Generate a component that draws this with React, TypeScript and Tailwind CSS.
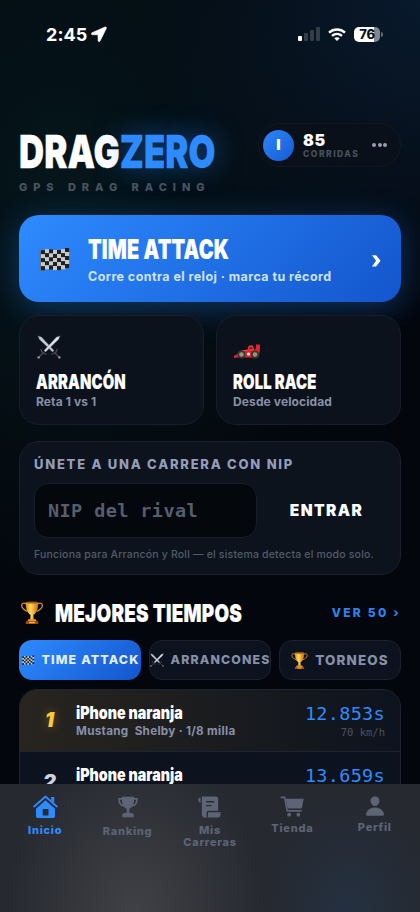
import type { ReactNode } from 'react';
import clsx from 'clsx';
import { IoPerson } from 'react-icons/io5';

type IconProps = { className?: string };

function FlagIcon({ className }: IconProps) {
  const cells = [];
  for (let r = 0; r < 5; r++) {
    for (let c = 0; c < 7; c++) {
      const lift = [2.2, 1.2, 1.4, 2, 2, 1.2, 0][c];
      cells.push(
        <rect
          key={`${r}-${c}`}
          x={2 + c * 4}
          y={1 + r * 4 + lift}
          width={4.1}
          height={4.1}
          fill={(r + c) % 2 ? '#c9c9c7' : '#20211f'}
        />
      );
    }
  }
  return (
    <svg viewBox="0 0 31 26" className={className}>
      <path d="M1.2 1v24" stroke="#77736b" strokeWidth="1.2" />
      {cells}
    </svg>
  );
}

function SwordsIcon({ className }: IconProps) {
  return (
    <svg viewBox="0 0 24 24" className={className} fill="none" strokeLinecap="round">
      <path d="M1 1l3.500 1L17 15.500l-1.500 1.500L2.500 4.500z" fill="#c5c9d3" stroke="#59606d" strokeWidth=".4" />
      <path d="M23 1l-3.500 1L7 15.500 8.500 17 21.500 4.500z" fill="#dde0e8" stroke="#59606d" strokeWidth=".4" />
      <path d="M4 14.500c.4 2.500 2 4.200 5 4.600M20 14.500c-.4 2.500-2 4.200-5 4.600" stroke="#474a57" strokeWidth="1.400" />
      <path d="M6.500 17.500L2 22M17.500 17.500L22 22" stroke="#4a4048" strokeWidth="1.500" />
      <circle cx="1.600" cy="22.400" r="1.200" fill="#9a9ca7" />
      <circle cx="22.400" cy="22.400" r="1.200" fill="#9a9ca7" />
    </svg>
  );
}

function RaceCarIcon({ className }: IconProps) {
  return (
    <svg viewBox="0 0 26 15" className={className}>
      <path d="M0 14v-2.500l2-.5L7 6.500l7-1 1-4h4l1 4 2-.5V.500h4V5l-1 7-8 1.500H3z" fill="#e3222c" />
      <path d="M14 3l4-1 1.500 3.500-4 .5zM8 7l6-1" fill="#a1121d" stroke="#f06a6a" strokeWidth=".6" />
      <circle cx="7.500" cy="10.500" r="4" fill="#39352f" />
      <circle cx="7.500" cy="10.500" r="2.300" fill="#9b9483" />
      <circle cx="21" cy="10.500" r="4" fill="#39352f" />
      <circle cx="21" cy="10.500" r="2.300" fill="#9b9483" />
      <circle cx="14.500" cy="10" r="1.600" fill="#fff" />
    </svg>
  );
}

function CupIcon({ className }: IconProps) {
  return (
    <svg viewBox="0 0 24 24" className={className} fill="none">
      <defs>
        <linearGradient id="gold" x1="0" x2="1">
          <stop offset="0" stopColor="#e08f12" />
          <stop offset=".4" stopColor="#ffd65a" />
          <stop offset="1" stopColor="#c87006" />
        </linearGradient>
      </defs>
      <path
        d="M6 3.200C3.500 1.600 1 2.300 1.200 5c.2 3.600 3.300 4.300 6 6M18 3.200c2.500-1.600 5-.9 4.800 1.800-.2 3.600-3.300 4.300-6 6"
        stroke="#d08d22"
        strokeWidth="1.300"
      />
      <path d="M5.500 1h13c0 6-1 11-5 13.500l.3 5h-3.600l.3-5C6.500 12 5.500 7 5.500 1z" fill="url(#gold)" />
      <ellipse cx="12" cy="1.500" rx="6.500" ry="1.100" fill="#a95c09" />
      <path d="M8 19h8l.8 2H7.200z" fill="#e89b22" />
      <path d="M5.500 21h13v3h-13z" fill="#a84a10" />
      <path d="M9 21.700h6v1.500H9z" fill="#ffb93f" />
    </svg>
  );
}

function HomeIcon({ className }: IconProps) {
  return (
    <svg viewBox="0 0 25 24" className={className} fill="currentColor">
      <path d="M1.200 11.500 12.500 1.500 23.800 11.500" fill="none" stroke="currentColor" strokeWidth="1.800" strokeLinecap="round" strokeLinejoin="round" />
      <path d="M18.200 2h3v6l-3-2.700z" />
      <path fillRule="evenodd" d="M12.500 5.300 22 13.800v7.400c0 1.100-.8 1.800-1.900 1.800H4.900C3.800 23 3 22.300 3 21.200v-7.400zM9.700 14v6.500h5.800V14z" />
    </svg>
  );
}

function TrophyIcon({ className }: IconProps) {
  return (
    <svg viewBox="0 0 24 24" className={className} fill="currentColor">
      <path d="M5.500 3.200H2.200c0 4 1.300 7 5.300 7.600M18.500 3.200h3.300c0 4-1.300 7-5.300 7.600" fill="none" stroke="currentColor" strokeWidth="1.800" />
      <path d="M5.300.8h13.400c.3 5.700-.6 11.200-5.200 13v4.700h2.300c1.400 0 2.400 1 2.400 2.400v2.400H5.800v-2.400c0-1.400 1-2.400 2.400-2.400h2.300v-4.700C5.900 12 5 6.500 5.300.8z" />
    </svg>
  );
}

function ScrollIcon({ className }: IconProps) {
  return (
    <svg viewBox="0 0 24 24" className={className} fill="currentColor">
      <path d="M2.600 2v5.500C1.300 7.500.5 6.500.5 5.200V4C.5 2.800 1.400 2 2.600 2z" />
      <path
        fillRule="evenodd"
        d="M4 1h14.500c1.400 0 2.500 1.100 2.500 2.500V16H11c-1.200 0-2 .8-2 2v5H7.500C5.500 23 4 21.600 4 19.700zM8.500 5.800v1.500H17V5.800zm0 4v1.500h5.700V9.800z"
      />
      <path d="M10.500 17.400H23.500v2.800c0 1.800-1.200 2.800-2.800 2.800H9.800c.5-.5.700-1.200.7-2z" />
    </svg>
  );
}

function CartIcon({ className }: IconProps) {
  return (
    <svg viewBox="0 0 25 24" className={className} fill="currentColor">
      <path d="M.8 2.500h3.500l2.700 14h14.500" fill="none" stroke="currentColor" strokeWidth="1.700" strokeLinecap="round" strokeLinejoin="round" />
      <path d="M5.500 4h18.700l-1.700 8.800c-.2.900-.8 1.300-1.600 1.300H7.400z" />
      <circle cx="9" cy="20.500" r="2" />
      <circle cx="18.600" cy="20.500" r="2" />
    </svg>
  );
}

function StatusBar() {
  return (
    <div className="flex items-center justify-between h-[68px] pl-[46px] pr-[37px] text-white">
      <div className="flex items-center gap-1">
        <span className="text-[18px] font-bold tracking-[0.1px]">2:45</span>
        <svg viewBox="0 0 16 16" className="w-[16px] h-[16px]" fill="currentColor" stroke="currentColor" strokeWidth=".6">
          <path d="M14 1 1 6.800c-1.200.5-.8 1.900.3 1.900l5.700.1.100 5.800c0 1.200 1.500 1.500 2 .3L15.300 2.400c.4-.9-.4-1.800-1.300-1.400z" />
        </svg>
      </div>
      <div className="flex items-center gap-2">
        <div className="flex items-end gap-[2px] h-[14px]">
          <i className="w-1 h-[5px] rounded-[1px] bg-white" />
          <i className="w-1 h-[8px] rounded-[1px] bg-[#343c46]" />
          <i className="w-1 h-[11px] rounded-[1px] bg-[#343c46]" />
          <i className="w-1 h-[14px] rounded-[1px] bg-[#343c46]" />
        </div>
        <svg viewBox="0 0 18 13" className="w-[18px] h-[13px]" fill="none" stroke="currentColor" strokeWidth="2.400">
          <path d="M1 4.600c4.600-4.200 11.400-4.200 16 0" />
          <path d="M4 7.900c2.900-2.600 7.100-2.600 10 0" />
          <path d="M9 13 6.300 10.200c1.500-1.400 3.900-1.400 5.400 0z" fill="currentColor" stroke="none" />
        </svg>
        <div className="flex items-center gap-[1px]">
          <div className="w-[26px] h-[15px] rounded-[5px] bg-[linear-gradient(90deg,#fff_76%,#80868e_76%)] text-[#08111c] text-[13px] leading-[15px] font-extrabold text-center tracking-[-0.3px]">
            76
          </div>
          <i className="w-[2px] h-[5px] rounded-r bg-[#626973]" />
        </div>
      </div>
    </div>
  );
}

// condensed display face
function Heading({ className, children }: { className?: string; children: ReactNode }) {
  return (
    <div className={clsx('font-black whitespace-nowrap origin-left w-0 text-white', className)}>{children}</div>
  );
}

const modes = [
  { name: 'ARRANCÓN', detail: 'Reta 1 vs 1', icon: <SwordsIcon className="w-[24px] h-[24px]" /> },
  { name: 'ROLL RACE', detail: 'Desde velocidad', icon: <RaceCarIcon className="w-[26px] h-[15px]" /> },
];

const tabs = [
  { label: 'TIME ATTACK', active: true, size: 'text-[12.4px]', icon: <FlagIcon className="w-[14px] h-[11px] shrink-0" /> },
  { label: 'ARRANCONES', active: false, size: 'text-[12.3px]', icon: <SwordsIcon className="w-[14px] h-[14px] shrink-0" /> },
  { label: 'TORNEOS', active: false, size: 'text-[13.4px]', icon: <CupIcon className="w-[17px] h-[17px] shrink-0" /> },
];

const times = [
  { pos: 1, name: 'iPhone naranja', car: 'Mustang\u00a0 Shelby · 1/8 milla', time: '12.853s', speed: '70 km/h' },
  { pos: 2, name: 'iPhone naranja', car: '', time: '13.659s', speed: '' },
];

const navItems = [
  { label: 'Inicio', icon: <HomeIcon className="w-[25px] h-[24px]" />, gap: 'gap-[5px]' },
  { label: 'Ranking', icon: <TrophyIcon className="w-[22px] h-[24px]" />, gap: 'gap-[6px]' },
  { label: 'Mis Carreras', icon: <ScrollIcon className="w-[23px] h-[24px]" />, gap: 'gap-[5px]' },
  { label: 'Tienda', icon: <CartIcon className="w-[25px] h-[23px]" />, gap: 'gap-[4px]' },
  { label: 'Perfil', icon: <IoPerson className="w-[22px] h-[22px]" />, gap: 'gap-[4px]' },
];

export default function App() {
  return (
    <div className="w-[420px] h-[912px] overflow-hidden flex flex-col bg-[#03060c] bg-[radial-gradient(ellipse_280px_330px_at_420px_0px,#091a2d,transparent),radial-gradient(ellipse_330px_440px_at_60px_180px,#05161b,transparent)] font-[Inter,sans-serif]">
      <div className="h-[784px] overflow-hidden">
        <StatusBar />

        <header className="flex justify-between pl-5 pr-[19px] mt-[55px] h-[92px]">
          <div className="pt-[2px] -ml-px">
            <Heading className="text-[46px] leading-[52px] scale-x-[0.755] tracking-[0.1px] [-webkit-text-stroke:0.3px]">
              DRAG<span className="text-[#2e8bff] [text-shadow:0_0_32px_rgba(46,139,255,0.55)]">ZERO</span>
            </Heading>
            <div className="mt-[2px] text-[11px] leading-4 font-extrabold tracking-[5.95px] text-[#4a5360]">GPS DRAG RACING</div>
          </div>
          <div className="flex items-center w-[143px] h-[44px] rounded-full border border-[#111822] bg-[#0a101a] pl-[4px] pr-[13px]">
            <div className="w-[31px] h-[31px] rounded-full bg-linear-to-br from-[#2e86fa] to-[#165bd3] flex items-center justify-center text-white text-[15px] font-black">
              I
            </div>
            <div className="ml-[9px] flex-1 pt-[2px]">
              <div className="text-white text-[16px] leading-[17px] font-black tracking-[0.6px]">85</div>
              <div className="text-[#48505e] text-[8.5px] leading-[11px] font-extrabold tracking-[1.5px]">CORRIDAS</div>
            </div>
            <div className="flex gap-[1.500px]">
              <i className="w-1 h-1 rounded-full bg-[#969eb0]" />
              <i className="w-1 h-1 rounded-full bg-[#969eb0]" />
              <i className="w-1 h-1 rounded-full bg-[#969eb0]" />
            </div>
          </div>
        </header>

        <main className="px-[19px]">
          <button className="flex items-center w-full h-[87px] rounded-[20px] pl-[20px] pr-[20px] text-left bg-[linear-gradient(135deg,#2e8bff,#1355cc)] shadow-[0_6px_32px_rgba(30,120,235,0.38)]">
            <FlagIcon className="w-[31px] h-[26px] mt-[3px]" />
            <div className="ml-[18px] flex-1 pt-[3px]">
              <Heading className="text-[27px] leading-[30px] scale-x-[0.735] tracking-[0.3px] [-webkit-text-stroke:0.2px]">TIME ATTACK</Heading>
              <div className="mt-[3px] text-[12.5px] leading-[18px] font-bold tracking-[0.43px] text-[#cfe3ff] whitespace-nowrap">
                Corre contra el reloj · marca tu récord
              </div>
            </div>
            <svg viewBox="0 0 10 13" className="w-[9px] h-[12px] mt-[4px]" fill="#fff">
              <path d="M0 0h4.500L9.500 6.300 4.500 12.600H0l4.500-6.300z" />
            </svg>
          </button>

          <div className="grid grid-cols-2 gap-[12px] mt-[13px]">
            {modes.map((m) => (
              <div key={m.name} className="h-[110px] rounded-[20px] border border-[#171e29] bg-[#0c121c] pl-4 pt-[19px]">
                <div className="h-[24px] pl-[1px] flex items-end">{m.icon}</div>
                <Heading className="mt-[11px] text-[20px] leading-[25px] scale-x-[0.74] tracking-[0.2px] [-webkit-text-stroke:0.15px]">{m.name}</Heading>
                <div className="text-[12px] leading-[13px] font-bold tracking-[0.12px] text-[#8890a8]">{m.detail}</div>
              </div>
            ))}
          </div>

          <section className="mt-4 h-[134px] rounded-[20px] border border-[#1a212d] bg-[#0c131d] px-[14px] pt-[13px]">
            <div className="text-[13px] leading-[18px] font-extrabold tracking-[1.76px] text-[#949dba] whitespace-nowrap">ÚNETE A UNA CARRERA CON NIP</div>
            <div className="flex mt-[10px]">
              <div className="w-[223px] h-[55px] rounded-[14px] border border-[#171d29] bg-[#04070c] pl-[13px] flex items-center font-['DejaVu_Sans_Mono',monospace] font-bold text-[18.5px] tracking-[0.4px] text-[#565d6d]">
                NIP del rival
              </div>
              <div className="flex-1 pl-[10px] flex items-center justify-center text-white text-[15.5px] font-black tracking-[1.4px]">
                ENTRAR
              </div>
            </div>
            <div className="mt-[10px] text-[10.5px] leading-[14px] font-medium tracking-[0.19px] text-[#535b69] whitespace-nowrap">
              Funciona para Arrancón y Roll — el sistema detecta el modo solo.
            </div>
          </section>

          <div className="flex items-center mt-[20px] h-[36px]">
            <CupIcon className="w-[24px] h-[23px] ml-[1px] -mt-[2px]" />
            <Heading className="ml-[11px] text-[25px] leading-[36px] scale-x-[0.755] tracking-[0.3px] [-webkit-text-stroke:0.2px]">MEJORES TIEMPOS</Heading>
            <div className="ml-auto text-[12px] font-extrabold tracking-[2.25px] text-[#2e83ef]">VER 50 ›</div>
          </div>

          <div className="grid grid-cols-3 gap-2 mt-[9px]">
            {tabs.map((t) => (
              <div
                key={t.label}
                className={clsx(
                  'h-[40px] rounded-[13px] flex items-center justify-center gap-[7px] whitespace-nowrap font-extrabold tracking-[1.15px]',
                  t.size,
                  t.active ? 'bg-[linear-gradient(135deg,#2e8bff,#1355cc)] text-[#e2eeff]' : 'border border-[#1a212d] bg-[#0d131e] text-[#8790a8]'
                )}
              >
                {t.icon}
                {t.label}
              </div>
            ))}
          </div>

          <div className="mt-[9px] rounded-t-[18px] border border-[#1d2430] overflow-hidden bg-[#0d131e]">
            {times.map((t) => (
              <div
                key={t.pos}
                className={clsx(
                  'flex h-[62px] pt-[13px] pr-[15px] border-b border-[#1d2430]',
                  t.pos === 1 && 'bg-[linear-gradient(90deg,#28251f,#0d131e)]'
                )}
              >
                <div
                  className={clsx(
                    'w-[56px] pl-[3px] pt-[2px] text-center text-[20px] leading-[30px] font-black italic',
                    t.pos === 1 ? 'text-[#ffc83c] [text-shadow:0_0_10px_rgba(255,200,60,0.35)]' : 'text-[#cdd3de]'
                  )}
                >
                  {t.pos}
                </div>
                <div className="flex-1">
                  <Heading className="text-[17px] leading-[20px] scale-x-[0.84]">{t.name}</Heading>
                  <div className="text-[11.7px] leading-[17px] font-bold tracking-[0.29px] text-[#8890a8] whitespace-nowrap">{t.car}</div>
                </div>
                <div className="text-right font-['DejaVu_Sans_Mono',monospace]">
                  <div className="text-[18.5px] leading-[22px] tracking-[0.3px] text-[#2e8bff]">{t.time}</div>
                  <div className="text-[10.500px] leading-[15px] text-[#4b525f]">{t.speed}</div>
                </div>
              </div>
            ))}
          </div>
        </main>
      </div>

      <nav className="h-[128px] grid grid-cols-5 px-[4px] pt-[11px] bg-[#262930] bg-[radial-gradient(ellipse_130px_170px_at_135px_128px,#404146,transparent),radial-gradient(ellipse_90px_120px_at_350px_128px,#243040,transparent)]">
        {navItems.map((n, i) => (
          <div key={n.label} className={clsx('flex flex-col items-center', n.gap, i === 0 ? 'text-[#2e8bff]' : 'text-[#5c6475]')}>
            {n.icon}
            <span className="text-[11px] leading-[12px] font-extrabold tracking-[0.75px] text-center px-3">{n.label}</span>
          </div>
        ))}
      </nav>
    </div>
  );
}
